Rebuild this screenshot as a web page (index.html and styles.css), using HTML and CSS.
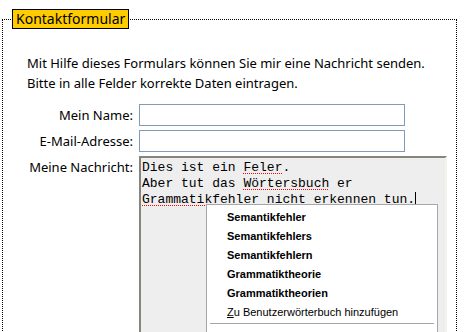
FILE: index.html
```html
<!DOCTYPE html>
<html>
<head>
    <title>Kontaktformular</title>
    <link rel="stylesheet" href="styles.css">
</head>
<body>
    <fieldset class="contact">
        <legend>Kontaktformular</legend>
        <p class="intro">Mit Hilfe dieses Formulars können Sie mir eine Nachricht senden.<br>
        Bitte in alle Felder korrekte Daten eintragen.</p>

        <div class="form">
            <label for="name">Mein Name:</label>
            <input type="text" id="name">

            <label for="mail">E-Mail-Adresse:</label>
            <input type="text" id="mail">

            <label>Meine Nachricht:</label>
            <div class="message">
                <div class="message-text">Dies ist ein <span class="typo">Feler</span>.<br>Aber tut das <span class="typo">Wörtersbuch</span> er<br><span class="typo">Grammatikfehler</span> nicht erkennen tun.<span class="caret"></span></div>

                <!-- Spell check menu -->
                <ul class="spell-menu">
                    <li class="suggest">Semantikfehler</li>
                    <li class="suggest">Semantikfehlers</li>
                    <li class="suggest">Semantikfehlern</li>
                    <li class="suggest">Grammatiktheorie</li>
                    <li class="suggest">Grammatiktheorien</li>
                    <li><u>Z</u>u Benutzerwörterbuch hinzufügen</li>
                    <li class="separator"></li>
                </ul>
            </div>
        </div>
    </fieldset>
</body>
</html>
```

FILE: styles.css
```css
body {
    margin: 0;
    padding: 0 10px 0 2px;
    font-family: "Noto Sans", sans-serif;
    font-size: 13px;
    color: #000;
    background-color: #fff;
    overflow: hidden;
}

.contact {
    margin: 9px 0 0 0;
    padding: 0 9px 0 9px;
    border: 1px dotted #000;
    height: 400px;
}

.contact legend {
    background-color: #ffcc00;
    border: 1px solid #000;
    padding: 0 3px;
    font-size: 14px;
    line-height: 18px;
}

.intro {
    margin: 24px 0 0 15px;
    line-height: 20px;
}

.form {
    display: grid;
    grid-template-columns: 121px 308px;
    column-gap: 6px;
    row-gap: 4px;
    margin-top: 11px;
}

.form label {
    text-align: right;
    line-height: 22px;
}

.form input {
    width: 266px;
    height: 22px;
    box-sizing: border-box;
    margin: 0;
    border: 1px solid #7f9db9;
    background-color: #fff;
}

.message {
    position: relative;
    height: 200px;
    box-sizing: border-box;
    border-top: 2px solid #85857b;
    border-left: 2px solid #85857b;
    border-right: 2px solid #f4f4ee;
    background-color: #eeeeee;
}

.message-text {
    padding: 2px 1px 0 1px;
    font-family: "Liberation Mono", monospace;
    font-size: 13px;
    line-height: 16px;
    white-space: nowrap;
}

.typo {
    background-image: linear-gradient(90deg, #ff0000 50%, transparent 50%);
    background-repeat: repeat-x;
    background-size: 2px 1px;
    background-position: left calc(100% - 1px);
}

.caret {
    display: inline-block;
    width: 0;
    height: 14px;
    border-left: 1px solid #000;
    vertical-align: -3px;
}

/* Spell check menu */
.spell-menu {
    position: absolute;
    top: 46px;
    left: 65px;
    width: 230px;
    margin: 0;
    padding: 3px 0 40px 0;
    list-style: none;
    background-color: #fff;
    border: 1px solid #a7a6aa;
    font-family: "Liberation Sans", Arial, sans-serif;
    font-size: 11px;
}

.spell-menu li {
    height: 19px;
    line-height: 19px;
    padding-left: 20px;
}

.spell-menu .suggest {
    font-weight: bold;
}

.spell-menu .separator {
    height: 1px;
    margin: 1px 3px 2px 3px;
    padding: 0;
    background-color: #a7a6aa;
}
```
